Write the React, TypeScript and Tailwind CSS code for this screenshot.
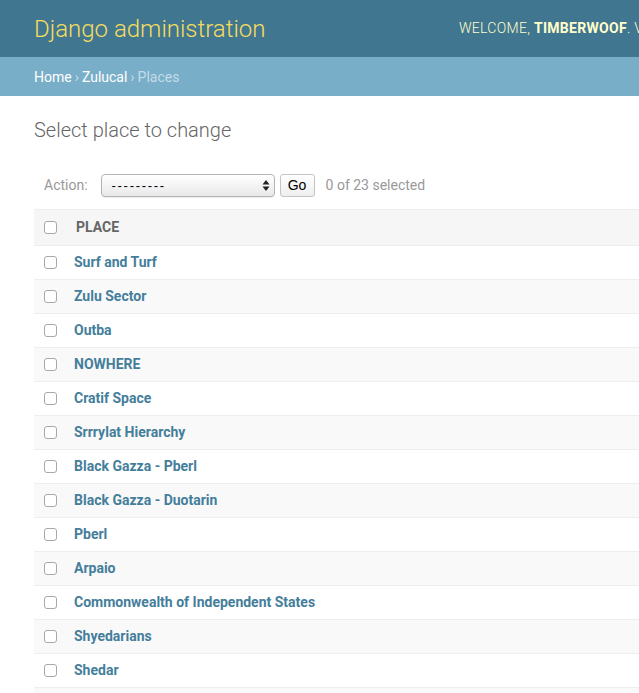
const places = [
  "Surf and Turf",
  "Zulu Sector",
  "Outba",
  "NOWHERE",
  "Cratif Space",
  "Srrrylat Hierarchy",
  "Black Gazza - Pberl",
  "Black Gazza - Duotarin",
  "Pberl",
  "Arpaio",
  "Commonwealth of Independent States",
  "Shyedarians",
  "Shedar",
  "Zulucal",
];

function Box() {
  return <span className="block w-[13px] h-[13px] rounded-[3px] border border-[#a8a8a8] bg-white shrink-0" />;
}

export default function App() {
  return (
    <div className="min-h-screen bg-white overflow-hidden font-['Roboto','Liberation_Sans',sans-serif]">
      {/* Header */}
      <header className="h-[57px] bg-[#417690] flex items-center pl-[34px] whitespace-nowrap overflow-hidden">
        <h1 className="w-[425px] shrink-0 text-[24px] font-light text-[#f5dd5d] leading-none">Django administration</h1>
        <div className="text-[14px] font-light text-[#ffffcc] uppercase tracking-[0.3px]">
          Welcome, <strong className="font-bold">Timberwoof</strong>. View site
        </div>
      </header>

      {/* Breadcrumbs */}
      <div className="h-[39px] bg-[#79aec8] flex items-center pl-[34px] pt-[2px] text-[14px] text-white">
        <span>Home</span>
        <span className="text-[#c4dce8] mx-[3px]">›</span>
        <span>Zulucal</span>
        <span className="text-[#c4dce8] mx-[3px]">›</span>
        <span className="text-[#c4dce8]">Places</span>
      </div>

      <main className="pl-[34px]">
        <h2 className="text-[20px] font-light text-[#666] pt-[20px] h-[78px] leading-[28px]">Select place to change</h2>

        {/* Actions */}
        <div className="flex items-center h-[23px] pl-[10px] text-[14px]">
          <span className="text-[#999] mr-[13px]">Action:</span>
          <div className="w-[174px] h-[23px] rounded-[4px] border border-[#b5b5b5] bg-gradient-to-b from-white to-[#e9e9e9] flex items-center justify-between pl-[10px] pr-[4px] text-[13px] text-black shadow-[0_1px_1px_rgba(0,0,0,0.08)]">
            <span className="font-['Liberation_Sans',sans-serif] tracking-[1.7px]">---------</span>
            <svg width="8" height="11" viewBox="0 0 8 11">
              <path d="M4 0 L7.5 4.5 H0.5 Z M4 11 L7.5 6.5 H0.5 Z" fill="#222" />
            </svg>
          </div>
          <div className="ml-[5px] w-[35px] h-[23px] rounded-[3px] border border-[#c4c4c4] bg-gradient-to-b from-white to-[#eeeeee] flex items-center justify-center text-[14px] text-black font-['Liberation_Sans',sans-serif]">
            Go
          </div>
          <span className="ml-[11px] text-[#999] text-[14px]">0 of 23 selected</span>
        </div>

        {/* Table */}
        <div className="mt-[12px] w-[700px]">
          <div className="h-[37px] bg-[#f6f6f6] border-t border-b border-[#eeeeee] flex items-center pl-[10px]">
            <Box />
            <span className="ml-[19px] text-[14px] font-bold text-[#666] uppercase">Place</span>
          </div>
          {places.map((p, i) => (
            <div
              key={p}
              className={`h-[34px] border-b border-[#eeeeee] flex items-center pl-[10px] ${i % 2 === 1 ? "bg-[#f9f9f9]" : "bg-white"}`}
            >
              <Box />
              <span className="ml-[17px] text-[14px] font-bold text-[#447e9b]">{p}</span>
            </div>
          ))}
        </div>
      </main>
    </div>
  );
}
